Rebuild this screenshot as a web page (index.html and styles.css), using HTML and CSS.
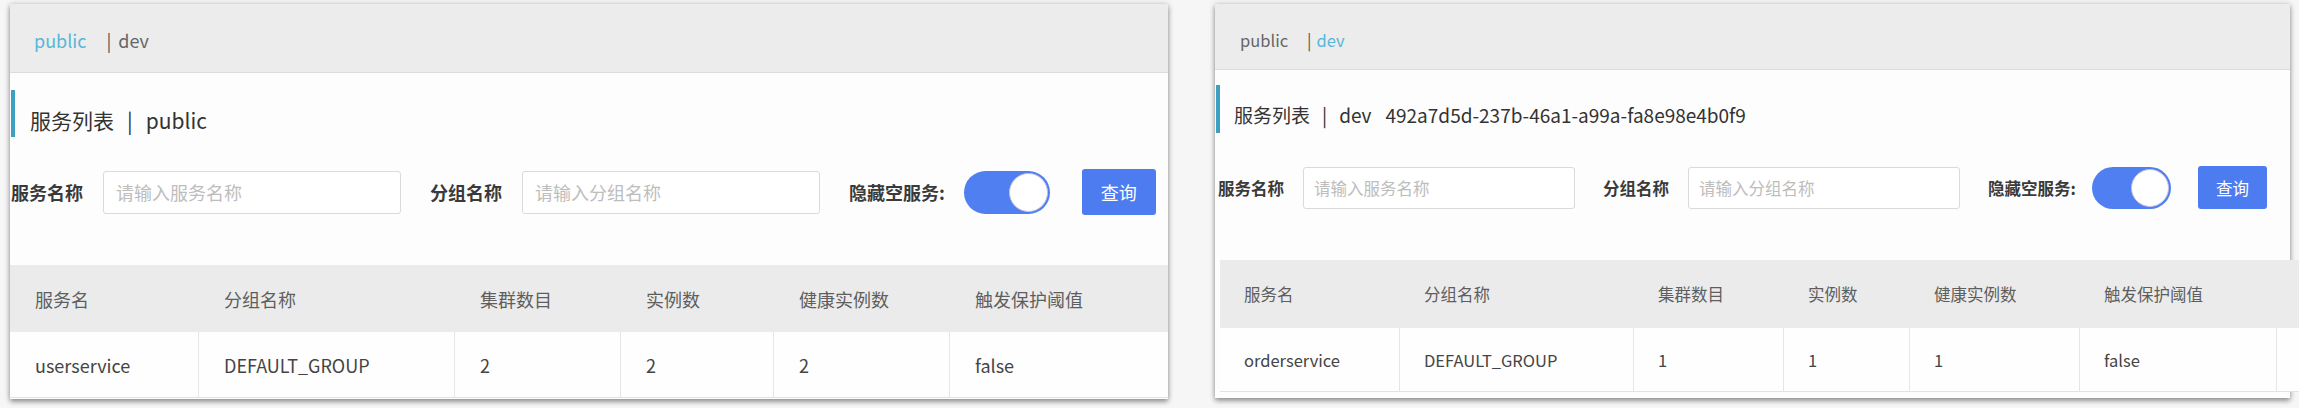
FILE: index.html
```html
<!DOCTYPE html>
<html lang="zh-CN">
<head>
<meta charset="utf-8">
<title>服务列表</title>
<link rel="stylesheet" href="styles.css">
</head>
<body>
<div class="screens">
  <section class="panel panel--public">
    <nav class="ns-bar">
      <a class="ns ns--active">public</a><span class="ns-sep">|</span><a class="ns">dev</a>
    </nav>
    <h2 class="page-title">服务列表<span class="title-sep">|</span>public</h2>
    <form class="search">
      <label class="field-label">服务名称</label>
      <input class="field-input" type="text" placeholder="请输入服务名称">
      <label class="field-label field-label--next">分组名称</label>
      <input class="field-input" type="text" placeholder="请输入分组名称">
      <span class="field-label field-label--next">隐藏空服务:</span>
      <span class="switch"><span class="switch-knob"></span></span>
      <button class="btn-query" type="button">查询</button>
    </form>
    <div class="table">
      <div class="th">服务名</div>
      <div class="th">分组名称</div>
      <div class="th">集群数目</div>
      <div class="th">实例数</div>
      <div class="th">健康实例数</div>
      <div class="th">触发保护阈值</div>
      <div class="td">userservice</div>
      <div class="td">DEFAULT_GROUP</div>
      <div class="td">2</div>
      <div class="td">2</div>
      <div class="td">2</div>
      <div class="td td--last">false</div>
    </div>
  </section>

  <section class="panel panel--dev">
    <nav class="ns-bar">
      <a class="ns">public</a><span class="ns-sep">|</span><a class="ns ns--active">dev</a>
    </nav>
    <h2 class="page-title">服务列表<span class="title-sep">|</span>dev<span class="title-id">492a7d5d-237b-46a1-a99a-fa8e98e4b0f9</span></h2>
    <form class="search">
      <label class="field-label">服务名称</label>
      <input class="field-input" type="text" placeholder="请输入服务名称">
      <label class="field-label field-label--next">分组名称</label>
      <input class="field-input" type="text" placeholder="请输入分组名称">
      <span class="field-label field-label--next">隐藏空服务:</span>
      <span class="switch"><span class="switch-knob"></span></span>
      <button class="btn-query" type="button">查询</button>
    </form>
    <div class="table">
      <div class="th">服务名</div>
      <div class="th">分组名称</div>
      <div class="th">集群数目</div>
      <div class="th">实例数</div>
      <div class="th">健康实例数</div>
      <div class="th">触发保护阈值</div>
      <div class="th th--pad"></div>
      <div class="td">orderservice</div>
      <div class="td">DEFAULT_GROUP</div>
      <div class="td">1</div>
      <div class="td">1</div>
      <div class="td">1</div>
      <div class="td">false</div>
      <div class="td td--last"></div>
    </div>
  </section>
</div>
</body>
</html>
```

FILE: styles.css
```css
* { box-sizing: border-box; }

html, body {
  margin: 0;
  padding: 0;
}

body {
  width: 2299px;
  height: 408px;
  background: #f6f6f6;
  font-family: "Noto Sans CJK SC", "Noto Sans", sans-serif;
  color: #333;
  overflow: hidden;
}

.screens {
  display: flex;
  align-items: flex-start;
  padding: 4px 0 0 10px;
  gap: 47px;
}

/* ---------- per-screenshot metrics ---------- */
.panel--public {
  --w: 1158px;
  --fs: 18px;
  --title-fs: 21px;
  --nav-h: 69px;
  --nav-pt: 4px;
  --nav-pl: 24px;
  --nav-sep-l: 20px;
  --nav-sep-r: 7px;
  --title-mt: 17px;
  --title-h: 47px;
  --title-pt: 12px;
  --title-pl: 15px;
  --title-sep: 13px;
  --search-mt: 32px;
  --search-pl: 1px;
  --search-h: 46px;
  --ctrl-h: 43px;
  --input-w: 298px;
  --input-pl: 12px;
  --lbl-gap: 20px;
  --field-gap: 29px;
  --sw-gap: 19px;
  --sw-w: 86px;
  --btn-gap: 32px;
  --btn-w: 74px;
  --btn-h: 46px;
  --table-mt: 50px;
  --table-ml: 0px;
  --th-h: 67px;
  --td-h: 66px;
  --cols: 189px 256px 166px 153px 176px 1fr;
  --cell-pl: 25px;
  --panel-pb: 1px;
}

.panel--dev {
  --w: 1075px;
  --fs: 16.5px;
  --title-fs: 19px;
  --nav-h: 66px;
  --nav-pt: 6px;
  --nav-pl: 25px;
  --nav-sep-l: 19px;
  --nav-sep-r: 5px;
  --title-mt: 15px;
  --title-h: 48px;
  --title-pt: 11px;
  --title-pl: 14px;
  --title-sep: 12px;
  --search-mt: 33px;
  --search-pl: 3px;
  --search-h: 43px;
  --ctrl-h: 42px;
  --input-w: 272px;
  --input-pl: 10px;
  --lbl-gap: 19px;
  --field-gap: 28px;
  --sw-gap: 16px;
  --sw-w: 79px;
  --btn-gap: 27px;
  --btn-w: 69px;
  --btn-h: 43px;
  --table-mt: 51px;
  --table-ml: 5px;
  --th-h: 68px;
  --td-h: 64px;
  --cols: 180px 234px 150px 126px 170px 197px 1fr;
  --cell-pl: 24px;
  --panel-pb: 6px;
}

/* ---------- panel ---------- */
.panel {
  width: var(--w);
  background: #fdfdfd;
  font-size: var(--fs);
  padding-bottom: var(--panel-pb);
  box-shadow: 0 3px 5px rgba(0, 0, 0, 0.35), 0 0 6px rgba(0, 0, 0, 0.18);
}

/* namespace bar */
.ns-bar {
  height: var(--nav-h);
  padding: var(--nav-pt) 0 0 var(--nav-pl);
  display: flex;
  align-items: center;
  background: #ececec;
  border-bottom: 1px solid #dcdcdc;
  font-size: var(--fs);
}

.ns {
  color: #666;
  text-decoration: none;
}

.ns--active {
  color: #58b6d8;
}

.ns-sep {
  color: #555;
  margin: 0 var(--nav-sep-r) 0 var(--nav-sep-l);
}

/* title */
.page-title {
  margin: var(--title-mt) 0 0 1px;
  height: var(--title-h);
  padding: var(--title-pt) 0 0 var(--title-pl);
  display: flex;
  align-items: center;
  border-left: 4px solid #3d9fc2;
  font-size: var(--title-fs);
  font-weight: normal;
  color: #333;
}

.title-sep {
  margin: 0 var(--title-sep);
}

.title-id {
  margin-left: 14px;
}

/* search row */
.search {
  margin: var(--search-mt) 0 0;
  padding-left: var(--search-pl);
  height: var(--search-h);
  display: flex;
  align-items: center;
}

.field-label {
  font-weight: bold;
  color: #3a3a3a;
  white-space: nowrap;
  margin-right: var(--lbl-gap);
}

.field-label--next {
  margin-left: var(--field-gap);
}

.field-input {
  width: var(--input-w);
  height: var(--ctrl-h);
  padding: 0 0 0 var(--input-pl);
  border: 1px solid #dadada;
  border-radius: 3px;
  background: #fff;
  font-family: inherit;
  font-size: var(--fs);
  color: #333;
  outline: none;
}

.field-input::placeholder {
  color: #bdbdbd;
}

.switch {
  margin-left: calc(var(--sw-gap) - var(--lbl-gap));
  width: var(--sw-w);
  height: var(--ctrl-h);
  padding: 2px;
  border-radius: 999px;
  background: #4f7ff1;
  display: flex;
  justify-content: flex-end;
  align-items: center;
}

.switch-knob {
  height: 100%;
  aspect-ratio: 1;
  border-radius: 50%;
  background: #fff;
  border: 1px solid #c8c2de;
}

.btn-query {
  margin-left: var(--btn-gap);
  width: var(--btn-w);
  height: var(--btn-h);
  border: none;
  border-radius: 3px;
  background: #4d7cf0;
  color: #fff;
  font-family: inherit;
  font-size: var(--fs);
  padding: 0;
}

/* table */
.table {
  margin: var(--table-mt) 0 0 var(--table-ml);
  display: grid;
  grid-template-columns: var(--cols);
}

.th {
  height: var(--th-h);
  display: flex;
  align-items: center;
  padding-left: var(--cell-pl);
  background: #ebebeb;
  color: #5e5e5e;
  white-space: nowrap;
}

.td {
  height: var(--td-h);
  display: flex;
  align-items: center;
  padding-left: var(--cell-pl);
  background: #fefefe;
  color: #444;
  border-right: 1px solid #e6e6e6;
  border-bottom: 1px solid #e2e2e2;
  white-space: nowrap;
}

.td--last {
  border-right: none;
}
```
